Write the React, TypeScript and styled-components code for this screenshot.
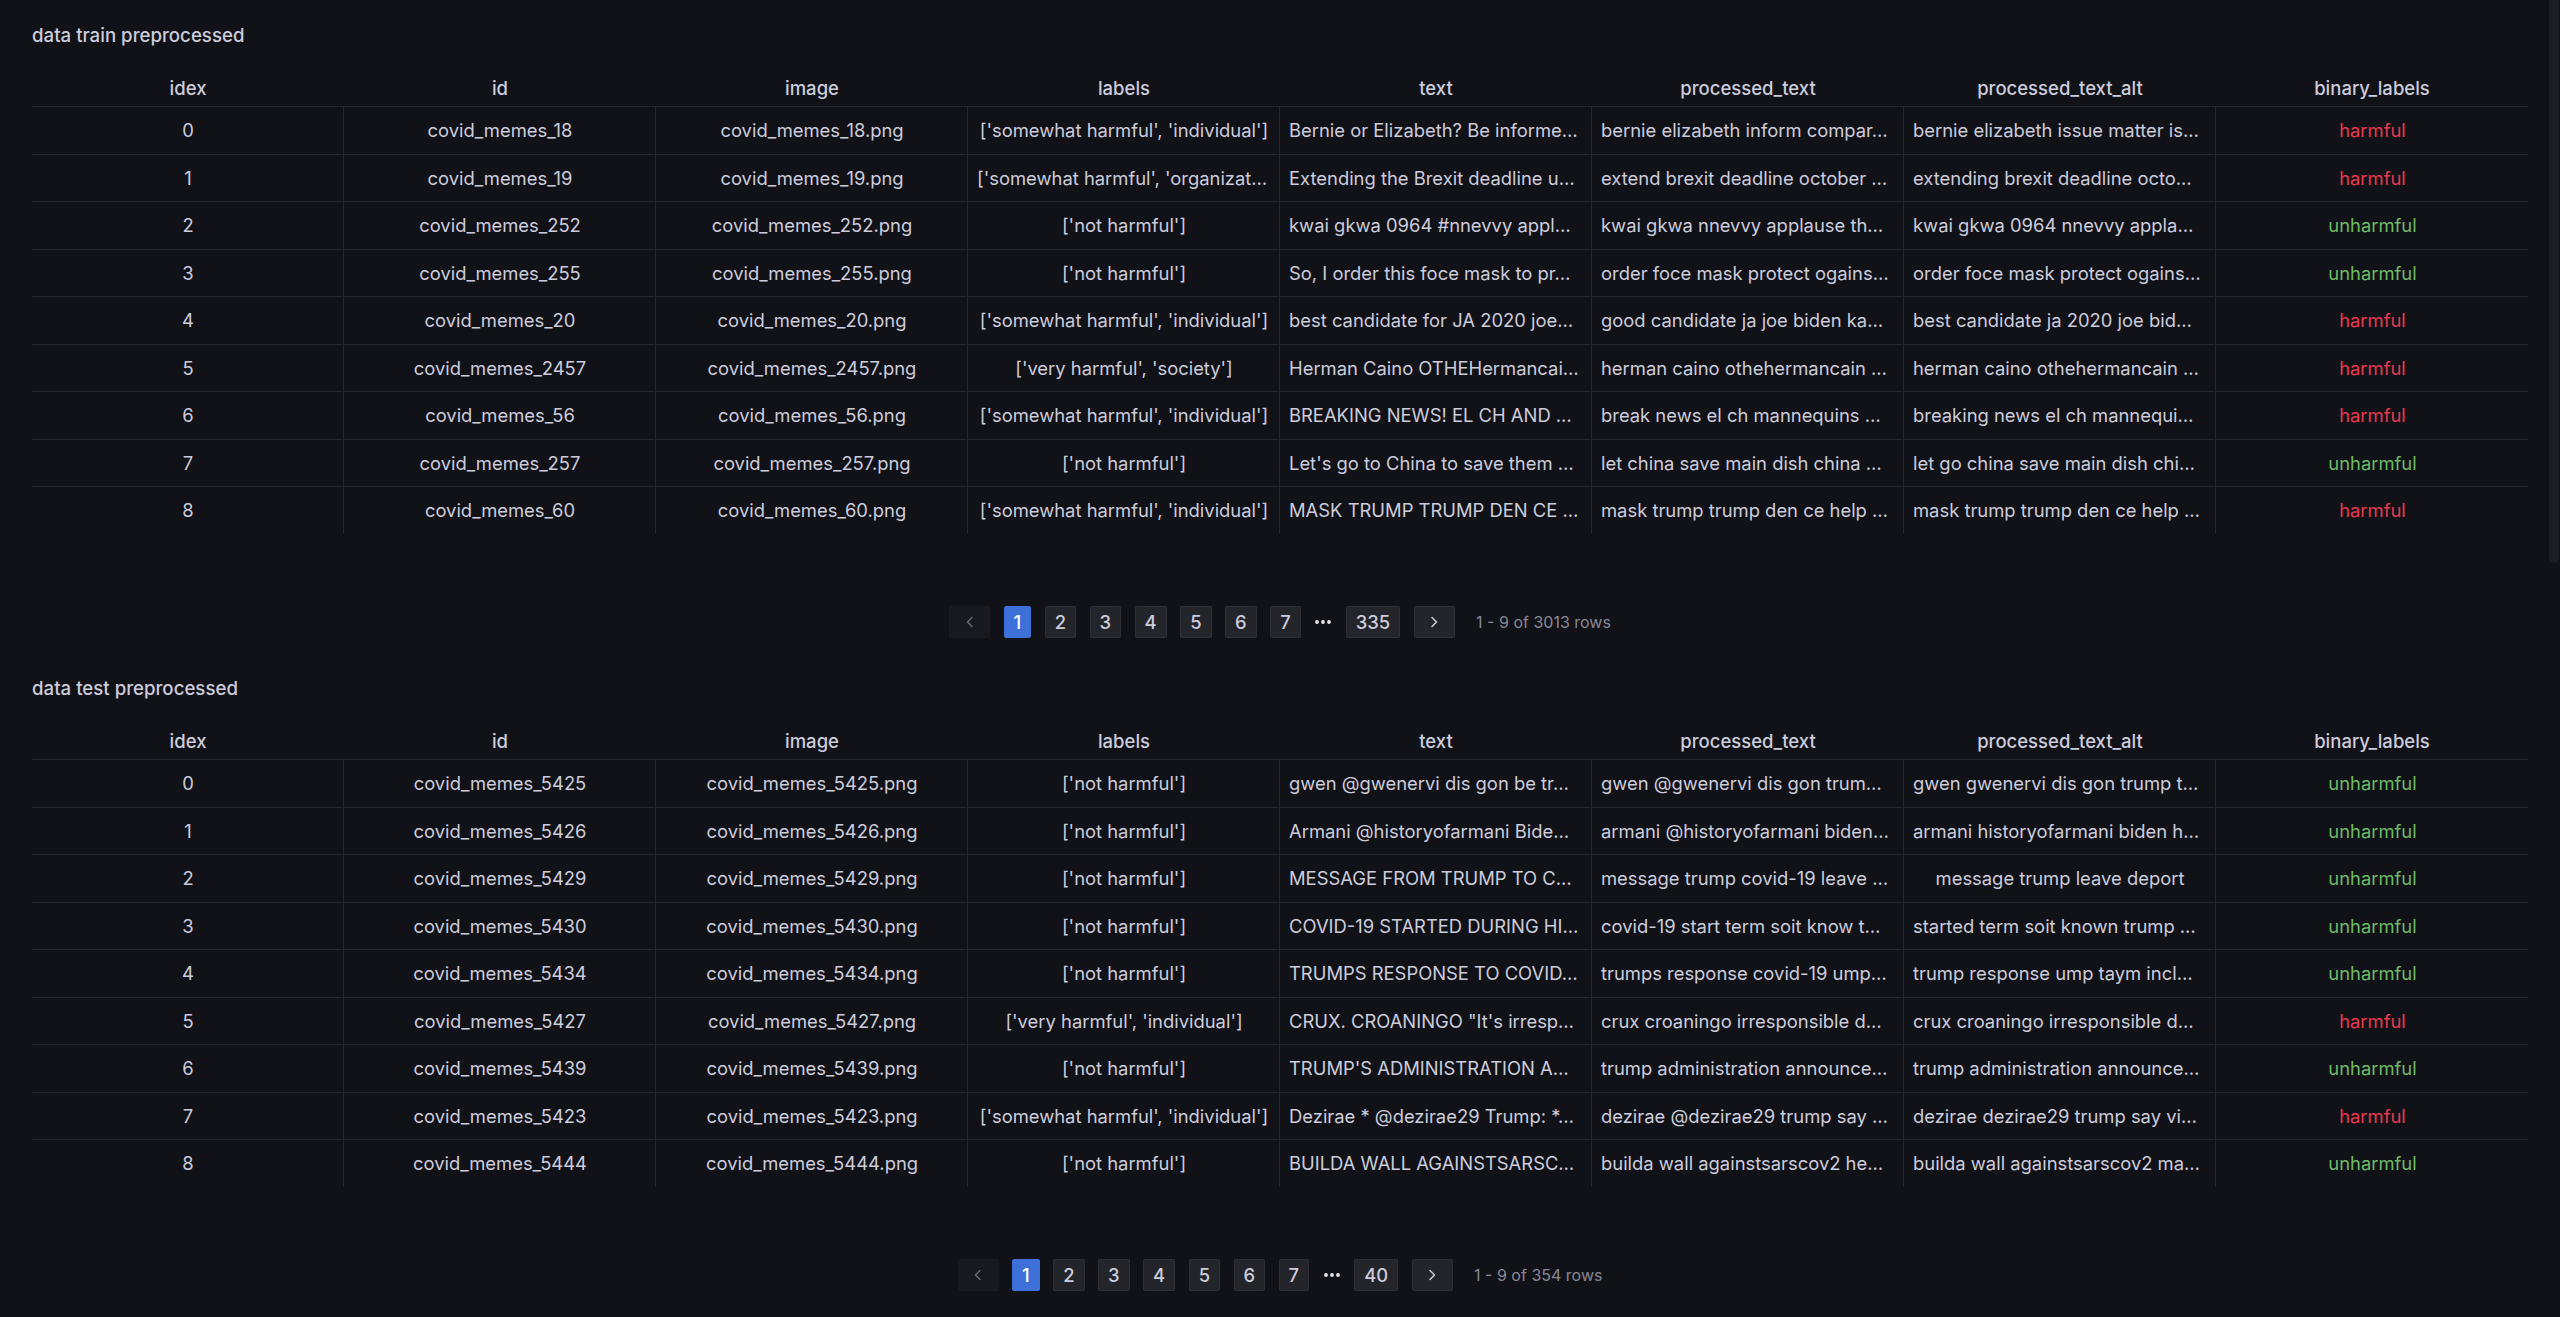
import React from "react";
import styled, { createGlobalStyle } from "styled-components";

const GlobalStyle = createGlobalStyle`
  html, body {
    margin: 0;
    padding: 0;
    background: #111217;
  }
  body {
    font-family: Inter, "Noto Sans", "Liberation Sans", sans-serif;
    color: #ccccdc;
    -webkit-font-smoothing: antialiased;
  }
  * { box-sizing: border-box; }
`;

const Page = styled.div`
  position: relative;
  min-height: 1317px;
  padding: 0 32px;
  display: flex;
  flex-direction: column;
`;

const Panel = styled.section<{ $top: number }>`
  display: flex;
  flex-direction: column;
  padding-top: ${(p) => p.$top}px;
`;

const PanelTitle = styled.h2`
  margin: 0;
  height: 24px;
  line-height: 24px;
  font-size: 18.67px;
  font-weight: 500;
  color: #ccccdc;
`;

const Table = styled.div`
  margin-top: 21px;
  width: 2496px;
  display: flex;
  flex-direction: column;
`;

const HeaderRow = styled.div`
  display: grid;
  grid-template-columns: repeat(8, 1fr);
  height: 38px;
  border-bottom: 1px solid rgba(204, 204, 220, 0.12);
`;

const HeaderCell = styled.div`
  display: flex;
  align-items: center;
  justify-content: center;
  padding: 0 8px;
  font-size: 18.5px;
  font-weight: 500;
  color: #ccccdc;
  white-space: nowrap;
`;

const Row = styled.div<{ $last: boolean }>`
  display: grid;
  grid-template-columns: repeat(8, 1fr);
  height: ${(p) => (p.$last ? "46.5px" : "47.5px")};
  border-bottom: ${(p) => (p.$last ? "none" : "1px solid rgba(204, 204, 220, 0.12)")};
`;

const Cell = styled.div<{ $left?: boolean; $tone?: "red" | "green"; $edge?: boolean }>`
  min-width: 0;
  padding: 0 8px 0 9px;
  line-height: 46.5px;
  font-size: 18.4px;
  font-weight: 400;
  white-space: nowrap;
  overflow: hidden;
  text-overflow: ellipsis;
  text-align: ${(p) => (p.$left ? "left" : "center")};
  color: ${(p) => (p.$tone === "red" ? "#e6394f" : p.$tone === "green" ? "#6fba64" : "#ccccdc")};
  border-right: ${(p) => (p.$edge ? "none" : "1px solid rgba(204, 204, 220, 0.12)")};
`;

const Pagination = styled.nav`
  margin-top: 72.5px;
  height: 32px;
  display: flex;
  justify-content: center;
  align-items: center;
  gap: 13.5px;
`;

const PageButton = styled.button<{ $active?: boolean; $disabled?: boolean; $arrow?: boolean }>`
  height: 32px;
  ${(p) => (p.$arrow ? "width: 41px; padding: 0;" : "padding: 0 9px;")}
  display: flex;
  align-items: center;
  justify-content: center;
  border-radius: 2px;
  font-family: Inter, "Noto Sans", sans-serif;
  font-size: 18.4px;
  font-weight: 500;
  border: 1px solid
    ${(p) => (p.$active ? "#3d71d9" : p.$disabled ? "rgba(204,204,220,0.02)" : "rgba(204,204,220,0.07)")};
  background: ${(p) =>
    p.$active ? "#3d71d9" : p.$disabled ? "rgba(204,204,220,0.04)" : "rgba(204,204,220,0.1)"};
  color: ${(p) => (p.$active ? "#ffffff" : p.$disabled ? "rgba(204,204,220,0.45)" : "#ccccdc")};
  cursor: ${(p) => (p.$disabled ? "default" : "pointer")};
`;

const Dots = styled.span`
  display: flex;
  align-items: center;
  width: 18px;
  height: 32px;
  color: #e6e6ef;
`;

const Summary = styled.span`
  margin-left: 8px;
  font-size: 16px;
  color: rgba(204, 204, 220, 0.65);
  white-space: nowrap;
`;

const ScrollThumb = styled.div`
  position: absolute;
  top: 0;
  right: 1px;
  width: 10px;
  height: 563px;
  border-radius: 0 0 5px 5px;
  background: rgba(204, 204, 220, 0.07);
`;

type Rec = {
  id: string;
  labels: string;
  labelsCut?: boolean;
  text: string;
  p1: string;
  p2: string;
  p2Fits?: boolean;
  harmful: boolean;
};

const train: Rec[] = [
  { id: "covid_memes_18", labels: "['somewhat harmful', 'individual']", text: "Bernie or Elizabeth? Be informe…", p1: "bernie elizabeth inform compar…", p2: "bernie elizabeth issue matter is…", harmful: true },
  { id: "covid_memes_19", labels: "['somewhat harmful', 'organizat…", labelsCut: true, text: "Extending the Brexit deadline u…", p1: "extend brexit deadline october …", p2: "extending brexit deadline octo…", harmful: true },
  { id: "covid_memes_252", labels: "['not harmful']", text: "kwai gkwa 0964 #nnevvy appl…", p1: "kwai gkwa nnevvy applause th…", p2: "kwai gkwa 0964 nnevvy appla…", harmful: false },
  { id: "covid_memes_255", labels: "['not harmful']", text: "So, I order this foce mask to pr…", p1: "order foce mask protect ogains…", p2: "order foce mask protect ogains…", harmful: false },
  { id: "covid_memes_20", labels: "['somewhat harmful', 'individual']", text: "best candidate for JA 2020 joe…", p1: "good candidate ja joe biden ka…", p2: "best candidate ja 2020 joe bid…", harmful: true },
  { id: "covid_memes_2457", labels: "['very harmful', 'society']", text: "Herman Caino OTHEHermancai…", p1: "herman caino othehermancain …", p2: "herman caino othehermancain …", harmful: true },
  { id: "covid_memes_56", labels: "['somewhat harmful', 'individual']", text: "BREAKING NEWS! EL CH AND …", p1: "break news el ch mannequins …", p2: "breaking news el ch mannequi…", harmful: true },
  { id: "covid_memes_257", labels: "['not harmful']", text: "Let's go to China to save them …", p1: "let china save main dish china …", p2: "let go china save main dish chi…", harmful: false },
  { id: "covid_memes_60", labels: "['somewhat harmful', 'individual']", text: "MASK TRUMP TRUMP DEN CE …", p1: "mask trump trump den ce help …", p2: "mask trump trump den ce help …", harmful: true },
];

const test: Rec[] = [
  { id: "covid_memes_5425", labels: "['not harmful']", text: "gwen @gwenervi dis gon be tr…", p1: "gwen @gwenervi dis gon trum…", p2: "gwen gwenervi dis gon trump t…", harmful: false },
  { id: "covid_memes_5426", labels: "['not harmful']", text: "Armani @historyofarmani Bide…", p1: "armani @historyofarmani biden…", p2: "armani historyofarmani biden h…", harmful: false },
  { id: "covid_memes_5429", labels: "['not harmful']", text: "MESSAGE FROM TRUMP TO C…", p1: "message trump covid-19 leave …", p2: "message trump leave deport", p2Fits: true, harmful: false },
  { id: "covid_memes_5430", labels: "['not harmful']", text: "COVID-19 STARTED DURING HI…", p1: "covid-19 start term soit know t…", p2: "started term soit known trump …", harmful: false },
  { id: "covid_memes_5434", labels: "['not harmful']", text: "TRUMPS RESPONSE TO COVID…", p1: "trumps response covid-19 ump…", p2: "trump response ump taym incl…", harmful: false },
  { id: "covid_memes_5427", labels: "['very harmful', 'individual']", text: "CRUX. CROANINGO \"It's irresp…", p1: "crux croaningo irresponsible d…", p2: "crux croaningo irresponsible d…", harmful: true },
  { id: "covid_memes_5439", labels: "['not harmful']", text: "TRUMP'S ADMINISTRATION A…", p1: "trump administration announce…", p2: "trump administration announce…", harmful: false },
  { id: "covid_memes_5423", labels: "['somewhat harmful', 'individual']", text: "Dezirae * @dezirae29 Trump: *…", p1: "dezirae @dezirae29 trump say …", p2: "dezirae dezirae29 trump say vi…", harmful: true },
  { id: "covid_memes_5444", labels: "['not harmful']", text: "BUILDA WALL AGAINSTSARSC…", p1: "builda wall againstsarscov2 he…", p2: "builda wall againstsarscov2 ma…", harmful: false },
];

const columns = ["idex", "id", "image", "labels", "text", "processed_text", "processed_text_alt", "binary_labels"];

const Chevron: React.FC<{ dir: "left" | "right" }> = ({ dir }) => (
  <svg width="16" height="16" viewBox="0 0 16 16" fill="none">
    <polyline
      points={dir === "left" ? "10,3.5 5.5,8 10,12.5" : "6,3.5 10.5,8 6,12.5"}
      stroke="currentColor"
      strokeWidth="1.5"
      strokeLinecap="round"
      strokeLinejoin="round"
    />
  </svg>
);

const DataTable: React.FC<{ rows: Rec[] }> = ({ rows }) => (
  <Table>
    <HeaderRow>
      {columns.map((c) => (
        <HeaderCell key={c}>{c}</HeaderCell>
      ))}
    </HeaderRow>
    {rows.map((r, i) => (
      <Row key={r.id} $last={i === rows.length - 1}>
        <Cell>{i}</Cell>
        <Cell>{r.id}</Cell>
        <Cell>{r.id}.png</Cell>
        <Cell $left={r.labelsCut}>{r.labels}</Cell>
        <Cell $left>{r.text}</Cell>
        <Cell $left>{r.p1}</Cell>
        <Cell $left={!r.p2Fits}>{r.p2}</Cell>
        <Cell $edge $tone={r.harmful ? "red" : "green"}>
          {r.harmful ? "harmful" : "unharmful"}
        </Cell>
      </Row>
    ))}
  </Table>
);

const Pager: React.FC<{ last: number; total: number }> = ({ last, total }) => (
  <Pagination>
    <PageButton $arrow $disabled>
      <Chevron dir="left" />
    </PageButton>
    {[1, 2, 3, 4, 5, 6, 7].map((n) => (
      <PageButton key={n} $active={n === 1}>
        {n}
      </PageButton>
    ))}
    <Dots>
      <svg width="18" height="6" viewBox="0 0 18 6">
        <circle cx="3" cy="3" r="1.9" fill="currentColor" />
        <circle cx="9" cy="3" r="1.9" fill="currentColor" />
        <circle cx="15" cy="3" r="1.9" fill="currentColor" />
      </svg>
    </Dots>
    <PageButton>{last}</PageButton>
    <PageButton $arrow>
      <Chevron dir="right" />
    </PageButton>
    <Summary>1 - 9 of {total} rows</Summary>
  </Pagination>
);

export default function App() {
  return (
    <>
      <GlobalStyle />
      <Page>
        <Panel $top={24}>
          <PanelTitle>data train preprocessed</PanelTitle>
          <DataTable rows={train} />
          <Pager last={335} total={3013} />
        </Panel>
        <Panel $top={39}>
          <PanelTitle>data test preprocessed</PanelTitle>
          <DataTable rows={test} />
          <Pager last={40} total={354} />
        </Panel>
        <ScrollThumb />
      </Page>
    </>
  );
}
